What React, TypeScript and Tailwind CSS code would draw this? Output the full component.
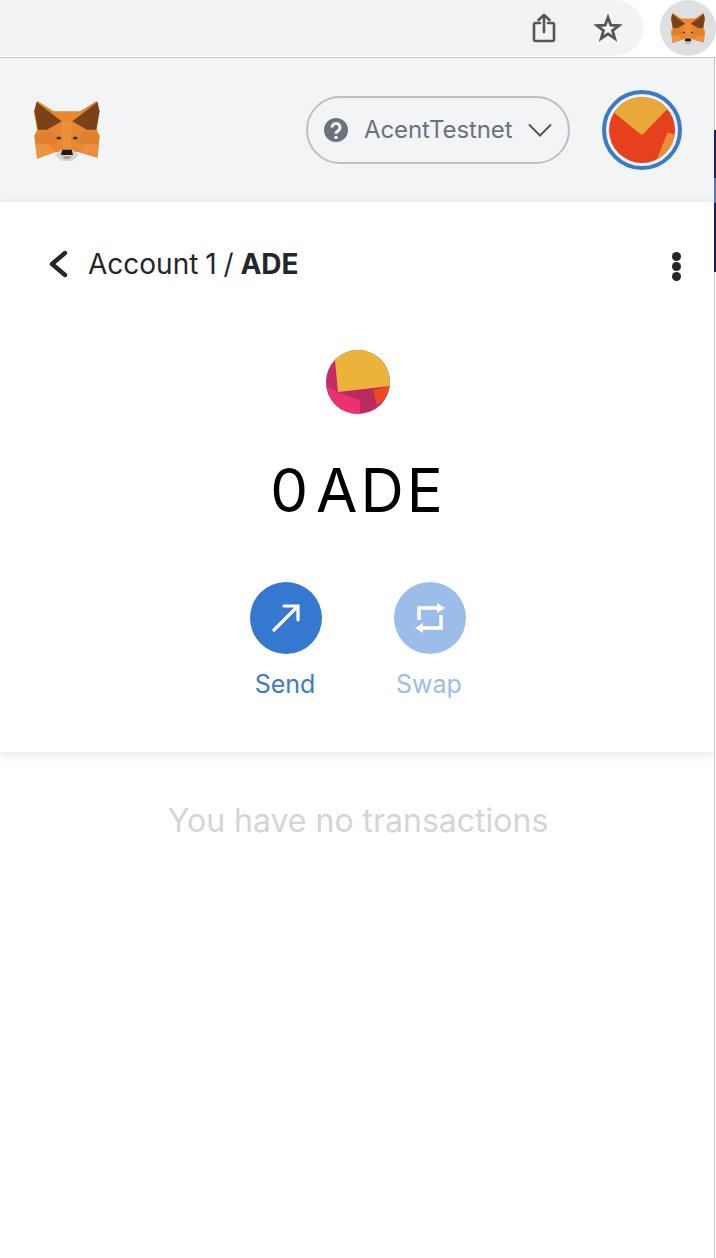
function Fox({ className }: { className?: string }) {
  return (
    <svg viewBox="95 55 210 190" className={className}>
      {/* head */}
      <polygon fill="#e8872f" points="110,60 160,92 240,92 290,60 298,92 290,148 298,165 292,232 235,215 165,215 110,235 102,165 110,148 100,92" />
      <polygon fill="#ec9038" points="185,120 215,120 212,205 188,205" />
      <polygon fill="#e0802c" points="102,165 150,152 172,188 140,190 104,192" />
      <polygon fill="#e0802c" points="298,165 250,152 228,188 260,190 296,192" />
      <polygon fill="#ed9442" points="104,192 140,190 165,215 110,235" />
      <polygon fill="#ea9040" points="296,192 260,190 235,215 292,232" />
      {/* ears */}
      <polygon fill="#794218" points="108,64 184,122 140,148 112,148 102,92" />
      <polygon fill="#794218" points="292,64 216,122 260,148 288,148 298,92" />
      {/* brows and eyes */}
      <polygon fill="#d68448" points="152,156 188,168 188,182 165,170" />
      <polygon fill="#d68448" points="248,156 212,168 212,182 235,170" />
      <ellipse cx="175" cy="173" rx="7" ry="4" fill="#4a2c17" />
      <ellipse cx="225" cy="173" rx="7" ry="4" fill="#4a2c17" />
      {/* muzzle */}
      <polygon fill="#d8d4ce" points="165,225 182,208 218,208 235,225 215,242 185,242" />
      <polygon fill="#1e1a18" points="185,208 215,208 218,224 182,224" />
      <polygon fill="#a89f95" points="186,228 214,228 208,236 192,236" />
    </svg>
  );
}

function ShareIcon() {
  return (
    <svg viewBox="0 0 24 32" className="w-6 h-8" fill="none" stroke="#54575a" strokeWidth="2.6" strokeLinecap="round" strokeLinejoin="round">
      <path d="M8 11H3.500a1.500 1.500 0 0 0-1.500 1.500v15A1.500 1.500 0 0 0 3.500 29h17a1.500 1.500 0 0 0 1.500-1.500v-15a1.500 1.500 0 0 0-1.500-1.500H16" />
      <path d="M12 20V3M6.500 8 12 3l5.500 5" />
    </svg>
  );
}

function StarIcon() {
  return (
    <svg viewBox="0 0 28 28" className="w-7 h-7" fill="none" stroke="#54575a" strokeWidth="2.8" strokeLinejoin="miter">
      <path d="M14 3.500 16.800 11.200 25 11.500 18.500 16.600 20.800 24.500 14 19.900 7.200 24.500 9.500 16.600 3 11.500 11.200 11.200Z" />
    </svg>
  );
}

function NetworkIcon() {
  return (
    <svg viewBox="0 0 24 24" className="w-6 h-6 shrink-0">
      <circle cx="12" cy="12" r="12" fill="#6a737d" />
      <path d="M8 9.500a4 4 0 1 1 6.200 3.300c-1.500 1-2.200 1.500-2.200 3" fill="none" stroke="#f2f4f6" strokeWidth="3" />
      <circle cx="12" cy="19.500" r="1.800" fill="#f2f4f6" />
    </svg>
  );
}

function AccountAvatar() {
  return (
    <div className="w-20 h-20 rounded-full border-4 border-[#3a7bc8] p-[3px]">
      <svg viewBox="0 0 64 64" className="w-full h-full rounded-full">
        <rect width="64" height="64" fill="#e5411f" />
        <polygon fill="#eaa83a" points="0,0 64,0 64,5 56,12 32,37 6,16" />
        <polygon fill="#ea8f35" points="57,34 62,36 64,38 64,64 46,62 52,46" />
      </svg>
    </div>
  );
}

function TokenAvatar() {
  return (
    <svg viewBox="0 0 64 64" className="w-16 h-16 rounded-full">
      <rect width="64" height="64" fill="#c52b67" />
      <polygon fill="#e83370" points="0,36 12,42 34,50 34,64 0,64" />
      <polygon fill="#b82a60" points="12,42 62,37 50,55 34,64 34,50" />
      <polygon fill="#ee4a1f" points="47,40 64,36 60,48 51,55" />
      <polygon fill="#ecb33c" points="8,0 64,0 64,36 12,42" />
    </svg>
  );
}

export default function App() {
  return (
    <div className="w-[716px] h-[1258px] bg-white flex flex-col overflow-hidden font-['Inter',sans-serif]">
      {/* browser toolbar */}
      <div className="h-[57px] flex shrink-0 items-center">
        <div className="w-[643px] h-[56px] self-start bg-[#f1f3f4] rounded-r-[28px] flex items-center justify-end gap-[38px] pr-[21px]">
          <ShareIcon />
          <StarIcon />
        </div>
        <div className="ml-[17px] w-[56px] h-[56px] self-start rounded-full bg-[#dedfe0] flex items-center justify-center shrink-0">
          <Fox className="w-[36px] h-[33px]" />
        </div>
      </div>

      <div className="flex-1 flex flex-col border-t border-[#c6c8ca] relative">
        {/* app header */}
        <div className="h-[144px] bg-[#f2f4f6] flex items-center justify-between pl-[32px] pr-[34px] shrink-0">
          <Fox className="w-[70px] h-[63px]" />
          <div className="flex items-center gap-[32px]">
            <div className="w-[264px] h-[68px] rounded-full border-2 border-[#bbc0c5] flex items-center pl-[16px] gap-[16px]">
              <NetworkIcon />
              <span className="text-[24px] tracking-[-0.1px] text-[#6a737d] leading-none w-[148px] whitespace-nowrap">AcentTestnet</span>
              <svg viewBox="0 0 24 14" className="w-6 h-[14px]" fill="none" stroke="#54575a" strokeWidth="2">
                <path d="M1 1.500 12 12.500 23 1.500" />
              </svg>
            </div>
            <AccountAvatar />
          </div>
        </div>

        {/* asset card */}
        <div className="h-[550px] shrink-0 flex flex-col items-center shadow-[0_3px_10px_rgba(0,0,0,0.09)]">
          <div className="w-full flex items-center justify-between h-[124px] pl-[48px] pr-[35px]">
            <div className="flex items-center gap-[20px] text-[#24272a]">
              <svg viewBox="0 0 20 28" className="w-5 h-7" fill="none" stroke="#24272a" strokeWidth="4.400" strokeLinecap="round" strokeLinejoin="round">
                <path d="M17 3 4 14l13 11" />
              </svg>
              <span className="text-[28px] leading-none whitespace-nowrap [word-spacing:-1px]">
                Account 1 / <b className="font-bold">ADE</b>
              </span>
            </div>
            <div className="flex flex-col gap-[1px] mt-[5px]">
              <span className="w-[9px] h-[9px] rounded-full bg-[#24272a]" />
              <span className="w-[9px] h-[9px] rounded-full bg-[#24272a]" />
              <span className="w-[9px] h-[9px] rounded-full bg-[#24272a]" />
            </div>
          </div>
          <div className="mt-[24px]">
            <TokenAvatar />
          </div>
          <div className="mt-[44px] text-[60px] leading-[64px] text-black [word-spacing:-9px]">
            0 <span className="tracking-[3px]">ADE</span>
          </div>
          <div className="mt-[60px] flex gap-[72px]">
            <div className="w-[72px] flex flex-col items-center gap-[15px]">
              <div className="w-[72px] h-[72px] rounded-full bg-[#3478d0] flex items-center justify-center">
                <svg viewBox="0 0 28 28" className="w-7 h-7" fill="none" stroke="white" strokeWidth="3.200" strokeLinecap="round" strokeLinejoin="miter">
                  <path d="M2 26 26 2M12 2h14v14" />
                </svg>
              </div>
              <span className="text-[25px] leading-[30px] text-[#3a7bc8] pr-[2px]">Send</span>
            </div>
            <div className="w-[72px] flex flex-col items-center gap-[15px]">
              <div className="w-[72px] h-[72px] rounded-full bg-[#9cbdea] flex items-center justify-center">
                <svg viewBox="0 0 32 32" className="w-8 h-8">
                  <path d="M5 18V6h20M27 13v13H7" fill="none" stroke="white" strokeWidth="3.500" />
                  <path d="M23 1l8 5-8 5zM9 21l-8 5 8 5z" fill="white" />
                </svg>
              </div>
              <span className="text-[25px] leading-[30px] text-[#9cbdea] pr-[2px]">Swap</span>
            </div>
          </div>
        </div>

        <div className="mt-[49px] text-center text-[32px] leading-[40px] text-[#d3d5d6]">You have no transactions</div>

        {/* edge of the window behind */}
        <div className="absolute right-0 top-0 bottom-0 w-[2px] flex flex-col bg-white border-l border-[#c6c8ca]">
          <div className="h-[72px] shrink-0" />
          <div className="h-[48px] shrink-0 -ml-px bg-[#1e1b5e]" />
          <div className="h-[25px] shrink-0 -ml-px bg-[#4a7cc8]" />
          <div className="h-[69px] shrink-0 -ml-px bg-[#1e1b5e]" />
        </div>
      </div>
    </div>
  );
}
